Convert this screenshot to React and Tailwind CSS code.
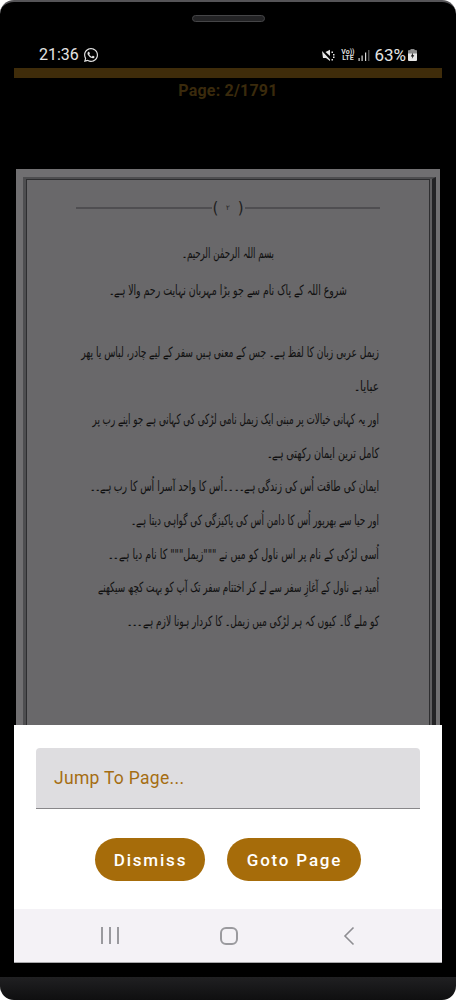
import React from "react";
import { FaWhatsapp } from "react-icons/fa";

const lines = [
  ["زیمل عربی زبان کا لفظ ہے۔ جس کے معنی ہیں سفر کے لیے چادر، لباس یا پھر", "scale-x-[0.654]"],
  ["عبایا۔", "scale-x-[0.76]"],
  ["اور یہ کہانی خیالات پر مبنی ایک زیمل نامی لڑکی کی کہانی ہے جو اپنے رب پر", "scale-x-[0.628]"],
  ["کامل ترین ایمان رکھتی ہے۔", "scale-x-[0.688]"],
  ["ایمان کی طاقت اُس کی زندگی ہے۔۔۔۔اُس کا واحد آسرا اُس کا رب ہے۔۔", "scale-x-[0.664]"],
  ["اور حیا سے بھرپور اُس کا دامن اُس کی پاکیزگی کی گواہی دیتا ہے۔", "scale-x-[0.634]"],
  ["اُسی لڑکی کے نام پر اس ناول کو میں نے \"\"\"زیمل\"\"\" کا نام دیا ہے۔۔", "scale-x-[0.679]"],
  ["اُمید ہے ناول کے آغازِ سفر سے لے کر اختتام سفر تک آپ کو بہت کچھ سیکھنے", "scale-x-[0.63]"],
  ["کو ملے گا۔ کیوں کہ ہر لڑکی میں زیمل۔ کا کردار ہونا لازم ہے۔۔۔", "scale-x-[0.648]"],
];

function Muted() {
  return (
    <svg width="13" height="13" viewBox="0 0 13 13" fill="#e6e6e6">
      <path d="M0 2 L8 10.5 L8 12 L4 9 L1 9 Z M3.5 3 L8 0.8 L8 7 Z" />
      <path d="M9.5 2.5h1.5v1.5h-1.5zM11 5h1.5v1.5H11zM11 7.5h1.5V9H11zM9.5 10h1.5v1.5H9.5z" />
    </svg>
  );
}

function Signal() {
  return (
    <svg width="12" height="13" viewBox="0 0 12 13" fill="#d8d8d8">
      <rect x="0.5" y="9" width="1.2" height="3" />
      <rect x="3.5" y="6.5" width="1.2" height="5.5" />
      <rect x="7" y="3.5" width="1.2" height="8.5" />
      <rect x="10.3" y="1" width="1" height="11" fill="#777" />
    </svg>
  );
}

function Battery() {
  return (
    <svg width="9" height="12" viewBox="0 0 9 12">
      <rect x="2.5" y="0" width="4" height="1.5" fill="#8a8a8a" />
      <rect x="0" y="1.5" width="9" height="10.5" rx="1" fill="#e6e6e6" />
      <rect x="0" y="1.5" width="9" height="3" fill="#8a8a8a" />
      <path d="M5 3.5 L2.8 7.5 H4.4 L3.8 10 L6.3 6.2 H4.8 Z" fill="#111" />
    </svg>
  );
}

export default function App() {
  return (
    <div className="w-[456px] h-[1000px] bg-white overflow-hidden font-['Roboto',sans-serif]">
      <div className="h-[977px] bg-black rounded-t-[14px] border-t-2 border-t-[#555457] flex flex-col">
        <div className="h-[13px]" />
        <div className="self-center w-[73px] h-[7px] rounded-full bg-[#232325] border border-[#454547]" />
        <div className="h-[24px]" />
        <div className="h-[18px] px-[39px] flex items-center justify-between">
          <div className="flex items-center gap-[4px]">
            <span className="text-[16px] leading-[18px] text-[#e4e4e4]">21:36</span>
            <FaWhatsapp className="text-[#e4e4e4] text-[16px]" />
          </div>
          <div className="flex items-center">
            <Muted />
            <div className="ml-[6px] w-[13px] flex flex-col items-center text-[7px] leading-[6.5px] font-bold text-[#dcdcdc]">
              <span>Vo))</span>
              <span>LTE</span>
            </div>
            <div className="ml-[4px]"><Signal /></div>
            <span className="ml-[4px] text-[17px] leading-[18px] text-[#e4e4e4]">63%</span>
            <div className="ml-[2px]"><Battery /></div>
          </div>
        </div>
        <div className="mt-[4px] mx-[14px] h-[10px] bg-[#3f2c0a]" />
        <div className="mt-[3px] h-[19px] text-center text-[16px] leading-[19px] font-bold tracking-[0.2px] text-[#3a2a0c]">
          Page: 2/1791
        </div>
        <div className="h-[69px]" />
        <div className="mx-[16px] flex-1 min-h-0 overflow-hidden bg-[#706f71] pt-[8px] pl-[7px] pr-[4px] flex flex-col">
          <div className="flex-1 min-h-0 flex border-t-[2px] border-t-[#4e4e50] border-l-[3px] border-l-[#4e4e50] border-r-[4px] border-r-[#232325] pr-[2px] bg-[#5f5e60]">
            <div className="flex-1 min-w-0 border-t border-t-[#2e2e30] border-l border-l-[#2e2e30] border-r border-r-[#2e2e30] bg-[#69686a] flex flex-col font-['DejaVu_Sans',sans-serif]">
              <div className="mt-[21px] ml-[49px] mr-[49px] flex items-center">
                <div className="flex-1 h-[2px] bg-[#4f4e51]" />
                <div className="w-[33px] flex justify-between items-center text-[#1e1e1e] px-[1px]">
                  <span className="text-[15px] leading-[14px]">(</span>
                  <span className="text-[7px] leading-[14px]">۲</span>
                  <span className="text-[15px] leading-[14px]">)</span>
                </div>
                <div className="flex-1 h-[2px] bg-[#4f4e51]" />
              </div>
              <div dir="rtl" className="mt-[28px] text-center text-[14px] leading-[20px] text-[#111111] scale-x-[0.617]">
                بسم اللہ الرحمٰن الرحیم۔
              </div>
              <div dir="rtl" className="mt-[17px] text-center text-[14px] leading-[20px] text-[#111111] scale-x-[0.67]">
                شروع اللہ کے پاک نام سے جو بڑا مہربان نہایت رحم والا ہے۔
              </div>
              <div dir="rtl" className="mt-[36px] pr-[50px] pl-[48px] text-[#111111]">
                {lines.map(([t, s], i) => (
                  <div key={i} className={`h-[33.6px] leading-[33.6px] text-[14px] whitespace-nowrap origin-right ${s}`}>{t}</div>
                ))}
              </div>
            </div>
          </div>
        </div>
        <div className="h-[184px] mx-[14px] bg-white pt-[23px] flex flex-col">
          <div className="mx-[22px] h-[61px] bg-[#dedde0] rounded-t-[4px] border-b border-b-[#88878a] flex items-center pl-[18px] pt-[1px] text-[17.5px] tracking-[0.3px] text-[#a56d12]">
            Jump To Page...
          </div>
          <div className="mt-[29px] flex justify-center gap-[22px]">
            <div className="w-[110px] h-[43px] pt-[2px] pl-[1px] rounded-full bg-[#a66c0a] flex items-center justify-center text-white text-[17px] font-medium tracking-[1.8px]">Dismiss</div>
            <div className="w-[134px] h-[43px] pt-[2px] pl-[1px] rounded-full bg-[#a66c0a] flex items-center justify-center text-white text-[17px] font-medium tracking-[1.8px]">Goto Page</div>
          </div>
        </div>
        <div className="h-[54px] mx-[14px] bg-[#f4f2f6] border-b border-b-[#a8a8aa] flex justify-center items-center">
          <div className="flex gap-[6px]">
            <div className="w-[2px] h-[17px] bg-[#9a9a9e]" />
            <div className="w-[2px] h-[17px] bg-[#9a9a9e]" />
            <div className="w-[2px] h-[17px] bg-[#9a9a9e]" />
          </div>
          <div className="ml-[101px] w-[18px] h-[18px] rounded-[6px] border-2 border-[#9a9a9e]" />
          <svg className="ml-[105px]" width="12" height="20" viewBox="0 0 12 20" fill="none" stroke="#8e8e92" strokeWidth="1.6">
            <path d="M10.5 1.5 L2 10 L10.5 18.5" />
          </svg>
        </div>
        <div className="h-[14px]" />
      </div>
      <div className="h-[23px] rounded-b-[14px] bg-gradient-to-b from-[#202022] to-[#0f0f10]" />
    </div>
  );
}
